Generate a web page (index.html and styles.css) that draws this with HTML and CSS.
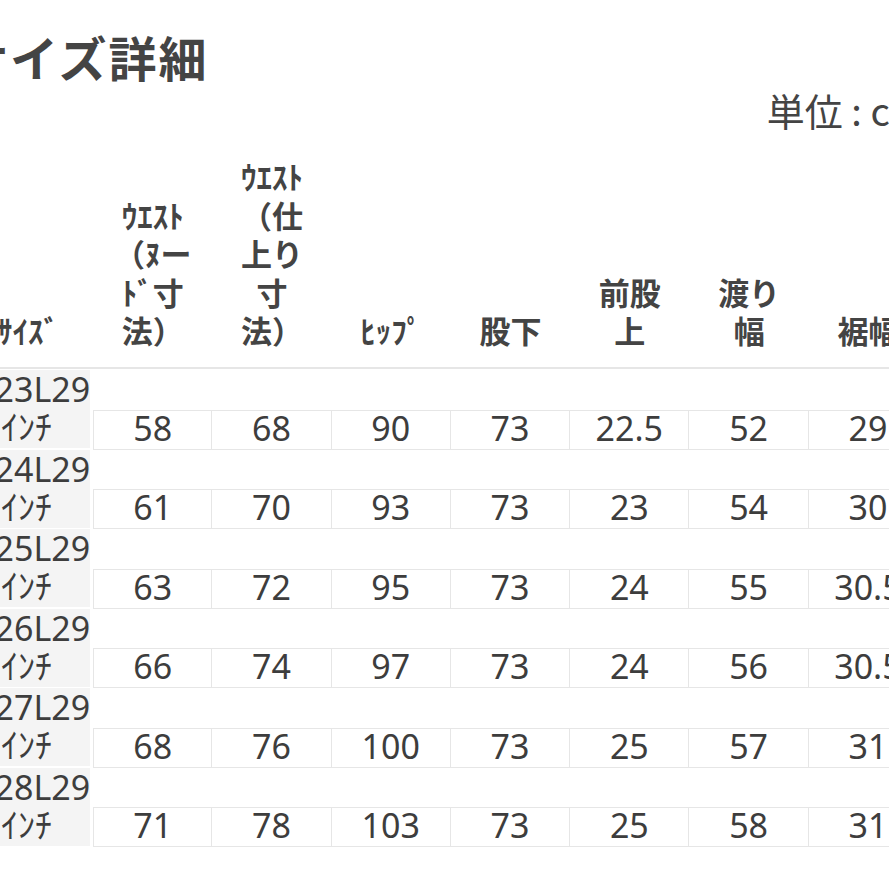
FILE: index.html
```html
<!DOCTYPE html>
<html lang="ja">
<head>
<meta charset="utf-8">
<title>サイズ詳細</title>
<link rel="stylesheet" href="styles.css">
</head>
<body>
<div class="sheet">
  <h1 class="title">サイズ詳細</h1>
  <div class="unit">単位 : cm</div>
  <div class="head">
    <div class="hcell first">ｻｲｽﾞ</div>
    <div class="hcell">ｳｴｽﾄ<br>（ﾇー<br>ﾄﾞ寸<br>法）</div>
    <div class="hcell">ｳｴｽﾄ<br>（仕<br>上り<br>寸<br>法）</div>
    <div class="hcell">ﾋｯﾌﾟ</div>
    <div class="hcell">股下</div>
    <div class="hcell">前股<br>上</div>
    <div class="hcell">渡り<br>幅</div>
    <div class="hcell">裾幅</div>
  </div>
  <div class="body">
    <div class="row">
      <div class="label"><span>W23L29</span><span>ｲﾝﾁ</span></div>
      <div class="val">58</div><div class="val">68</div><div class="val">90</div><div class="val">73</div><div class="val">22.5</div><div class="val">52</div><div class="val">29</div>
    </div>
    <div class="row">
      <div class="label"><span>W24L29</span><span>ｲﾝﾁ</span></div>
      <div class="val">61</div><div class="val">70</div><div class="val">93</div><div class="val">73</div><div class="val">23</div><div class="val">54</div><div class="val">30</div>
    </div>
    <div class="row">
      <div class="label"><span>W25L29</span><span>ｲﾝﾁ</span></div>
      <div class="val">63</div><div class="val">72</div><div class="val">95</div><div class="val">73</div><div class="val">24</div><div class="val">55</div><div class="val">30.5</div>
    </div>
    <div class="row">
      <div class="label"><span>W26L29</span><span>ｲﾝﾁ</span></div>
      <div class="val">66</div><div class="val">74</div><div class="val">97</div><div class="val">73</div><div class="val">24</div><div class="val">56</div><div class="val">30.5</div>
    </div>
    <div class="row">
      <div class="label"><span>W27L29</span><span>ｲﾝﾁ</span></div>
      <div class="val">68</div><div class="val">76</div><div class="val">100</div><div class="val">73</div><div class="val">25</div><div class="val">57</div><div class="val">31</div>
    </div>
    <div class="row">
      <div class="label"><span>W28L29</span><span>ｲﾝﾁ</span></div>
      <div class="val">71</div><div class="val">78</div><div class="val">103</div><div class="val">73</div><div class="val">25</div><div class="val">58</div><div class="val">31</div>
    </div>
  </div>
</div>
</body>
</html>
```

FILE: styles.css
```css
html, body {
  margin: 0;
  padding: 0;
  background: #ffffff;
}
body {
  width: 889px;
  height: 889px;
  overflow: hidden;
  font-family: "Noto Sans CJK JP", "Noto Sans", sans-serif;
  color: #444444;
}
.sheet {
  margin-left: -27px;
  width: 955px;
}
.title {
  margin: 0 0 0 -13px;
  padding-top: 26px;
  font-size: 48px;
  line-height: 60px;
  font-weight: 700;
  letter-spacing: 2px;
  color: #444444;
  white-space: nowrap;
}
.unit {
  margin-top: 1px;
  text-align: right;
  font-size: 38px;
  line-height: 46px;
  padding-right: 3px;
  white-space: nowrap;
  color: #444444;
}
.head {
  display: flex;
  height: 234px;
  border-bottom: 2px solid #e6e6e6;
}
.hcell {
  box-sizing: border-box;
  width: 119.3px;
  flex: none;
  display: flex;
  flex-direction: column;
  justify-content: flex-end;
  align-items: center;
  text-align: center;
  font-size: 31px;
  line-height: 38.5px;
  font-weight: 700;
  padding-bottom: 17.5px;
  white-space: nowrap;
}
.hcell.first {
  width: 120px;
  padding-right: 10px;
}
.body {
  padding-top: 1px;
}
.row {
  display: grid;
  grid-template-columns: 120px repeat(7, 119.3px);
  grid-template-rows: 39.5px 40px;
}
.label {
  grid-row: 1 / 3;
  grid-column: 1;
  box-sizing: border-box;
  background: #f4f4f4;
  margin-right: 3px;
  margin-bottom: 1.5px;
  padding-right: 10px;
  display: flex;
  flex-direction: column;
  align-items: center;
  font-family: "Noto Sans", "Noto Sans CJK JP", sans-serif;
  font-size: 34px;
  line-height: 38px;
  white-space: nowrap;
  color: #3d3d3d;
}
.val {
  grid-row: 2;
  box-sizing: border-box;
  border: 1px solid #e6e6e6;
  border-left: none;
  display: flex;
  align-items: center;
  justify-content: center;
  font-family: "Noto Sans", "Noto Sans CJK JP", sans-serif;
  font-size: 34px;
  line-height: 38px;
  padding-bottom: 4px;
  color: #3d3d3d;
  white-space: nowrap;
}
.label + .val {
  border-left: 1px solid #e6e6e6;
}
```
